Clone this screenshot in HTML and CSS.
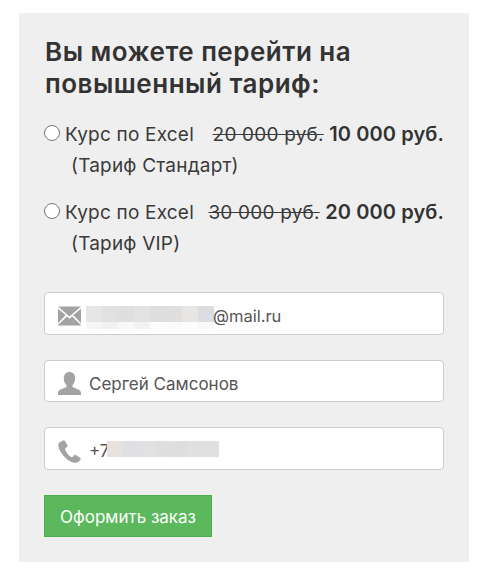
FILE: index.html
```html
<!DOCTYPE html>
<html lang="ru">
<head>
<meta charset="utf-8">
<title>Тариф</title>
<link rel="stylesheet" href="styles.css">
</head>
<body>
<form class="panel">
  <h2 class="title">Вы можете перейти на повышенный тариф:</h2>
  <label class="option">
    <span class="line"><input class="radio" type="radio" name="tariff"><span class="name">Курс по Excel</span><span class="prices"><s class="old">20 000 руб.</s> <b class="new">10 000 руб.</b></span></span>
    <span class="sub">(Тариф Стандарт)</span>
  </label>
  <label class="option option-vip">
    <span class="line"><input class="radio" type="radio" name="tariff"><span class="name">Курс по Excel</span><span class="prices"><s class="old">30 000 руб.</s> <b class="new">20 000 руб.</b></span></span>
    <span class="sub">(Тариф VIP)</span>
  </label>
  <div class="field field-first">
    <svg class="icon" viewBox="0 0 24 20"><path d="M0 0h24L12 10.500z"/><path d="M0 2.500v15L8 9z"/><path d="M24 2.500v15L16 9z"/><path d="M0 20h24v-.5l-9.300-9-2.700 2.400-2.700-2.400L0 19.500z"/></svg>
    <span class="mosaic mosaic-mail">
      <i style="background:#e8e6e4"></i><i style="background:#e0e1e3"></i><i style="background:#dfdfdf"></i><i style="background:#e3e3e4"></i><i style="background:#dedede"></i><i style="background:#e0dfde"></i><i style="background:#e7e6e4"></i><i style="background:#dcdde0"></i>
      <i style="background:#f7f6f5"></i><i style="background:#f1f1f2"></i><i style="background:#f8f8f8"></i><i style="background:#f3f3f4"></i><i style="background:#fdfdfd"></i><i style="background:#fbfbfb"></i><i style="background:#fdfdfc"></i><i style="background:#f9f9fa"></i>
    </span>
    <span class="value value-mail">@mail.ru</span>
  </div>
  <div class="field">
    <svg class="icon" viewBox="0 0 24 24"><path d="M12 0c3.700 0 6 2.700 6 6.500 0 3-1.200 5.500-2.800 7v2.200c1.500 1 8.800 2.700 8.800 5.800V24H0v-2.500c0-3.100 7.300-4.800 8.800-5.800v-2.200C7.200 12 6 9.500 6 6.500 6 2.700 8.300 0 12 0z"/></svg>
    <span class="value value-name">Сергей Самсонов</span>
  </div>
  <div class="field">
    <svg class="icon" viewBox="0 0 24 24"><path d="M5.500.5 1.800 2.300C.3 3.300 0 5 .5 7c1.600 6.500 8.500 14.500 15 16.500 2.300.6 4.700.2 6.500-1.300l1.500-1.700c.4-.6.200-1.200-.3-1.600l-4.500-3.200c-.7-.4-1.300-.3-1.800.2l-1.400 1.700c-.5.500-1 .6-1.600.2-3-1.800-5.300-4.800-6.500-8-.2-.6 0-1 .5-1.400l1.600-1.200c.6-.5.700-1 .4-1.700L7.200 1C6.800.3 6.200.2 5.500.5z"/></svg>
    <span class="value value-phone">+7</span>
    <span class="mosaic mosaic-phone">
      <i style="background:#e7e2df"></i><i style="background:#e0e0e3"></i><i style="background:#e1e1e3"></i><i style="background:#dfdfdf"></i><i style="background:#dedede"></i><i style="background:#e2dfdf"></i><i style="background:#dfe0e2"></i>
    </span>
  </div>
  <button class="submit" type="button">Оформить заказ</button>
</form>
</body>
</html>
```
FILE: styles.css
```css
* { box-sizing: border-box; }
html, body { margin: 0; background: #fff; }
body {
  padding: 13px 27px 8px 19px;
  font-family: Inter, "Noto Sans", sans-serif;
  color: #3a3a3a;
}
.panel {
  display: block;
  width: 450px;
  height: 549px;
  padding: 23px 25px 0;
  background: #efefef;
}
.title {
  margin: 0 0 19px;
  padding-left: 1px;
  font-size: 26px;
  line-height: 32px;
  font-weight: 600;
  letter-spacing: 0.5px;
  color: #333;
}
.option {
  display: block;
  margin-bottom: 16px;
  font-size: 19px;
  line-height: 31px;
  letter-spacing: 0.2px;
}
.option-vip { margin-bottom: 33px; }
.radio {
  flex: none;
  width: 15.500px;
  height: 15.500px;
  margin: 6px 5.500px 0 0;
}
.line {
  display: flex;
  align-items: flex-start;
  white-space: pre;
  width: 400px;
}
.prices { margin-left: auto; }
.new { font-size: 20px; font-weight: 600; letter-spacing: 0.1px; color: #333; }
.sub { display: block; padding-left: 27px; }
.field {
  display: flex;
  align-items: center;
  width: 400px;
  height: 42.500px;
  margin-bottom: 25px;
  padding: 6px 0 0 13px;
  background: #fff;
  border: 1px solid #ccc;
  border-radius: 4px;
  font-size: 17px;
  color: #555;
}
.icon { flex: none; width: 23px; height: 23px; fill: #a3a3a3; }
.field-first .icon { height: 20px; }
.value-mail { font-size: 16.500px; margin-left: -1px; }
.value-name { margin-left: 8px; }
.value-phone { margin-left: 8px; width: 18px; }
.mosaic { display: grid; flex: none; }
.mosaic-mail {
  grid-template-columns: repeat(8, 16px);
  grid-template-rows: 16px 7px;
  margin: 2px 0 0 5px;
}
.mosaic-phone {
  grid-template-columns: repeat(7, 16px);
  grid-template-rows: 16px;
  margin-bottom: 4px;
}
.submit {
  display: block;
  width: 168px;
  height: 42px;
  padding: 2px 0 0;
  border: 1px solid #4cae4c;
  background: #5cb85c;
  color: #fff;
  font: inherit;
  font-size: 17px;
}
```
